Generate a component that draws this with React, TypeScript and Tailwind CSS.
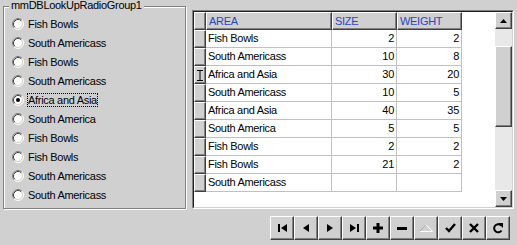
import React from 'react';

const radioItems = [
  'Fish Bowls',
  'South Americass',
  'Fish Bowls',
  'South Americass',
  'Africa and Asia',
  'South America',
  'Fish Bowls',
  'Fish Bowls',
  'South Americass',
  'South Americass',
];

const rows = [
  ['Fish Bowls', '2', '2'],
  ['South Americass', '10', '8'],
  ['Africa and Asia', '30', '20'],
  ['South Americass', '10', '5'],
  ['Africa and Asia', '40', '35'],
  ['South America', '5', '5'],
  ['Fish Bowls', '2', '2'],
  ['Fish Bowls', '21', '2'],
  ['South Americass', '', ''],
];

const Radio = ({ checked }: { checked: boolean }) => (
  <svg width="12" height="12" viewBox="0 0 12 12" className="shrink-0">
    <circle cx="6" cy="6" r="5" fill="#fff" />
    <path d="M9.89 2.11 A5.5 5.5 0 0 0 2.11 9.89" stroke="#808080" fill="none" />
    <path d="M2.11 9.89 A5.5 5.5 0 0 0 9.89 2.11" stroke="#fff" fill="none" />
    <path d="M9.18 2.82 A4.5 4.5 0 0 0 2.82 9.18" stroke="#404040" fill="none" />
    <path d="M2.82 9.18 A4.5 4.5 0 0 0 9.18 2.82" stroke="#d4d0c8" fill="none" />
    {checked && <circle cx="6" cy="6" r="2" fill="#000" />}
  </svg>
);

const raised =
  'bg-[#d0d0d0] border-t border-l border-t-white border-l-white border-r border-b border-r-[#404040] border-b-[#404040] shadow-[inset_-1px_-1px_0_#808080]';

const ScrollBtn = ({ up }: { up: boolean }) => (
  <div className={`w-[17px] h-[17px] flex items-center justify-center ${raised}`}>
    <svg width="7" height="4" viewBox="0 0 7 4">
      {up ? <path d="M3.5 0 L7 4 L0 4 Z" fill="#000" /> : <path d="M0 0 L7 0 L3.5 4 Z" fill="#000" />}
    </svg>
  </div>
);

const navIcons = [
  // first
  <svg width="9" height="8" viewBox="0 0 9 8"><rect x="0" y="0" width="2" height="8" fill="#000" /><path d="M9 0 L9 8 L3 4 Z" fill="#000" /></svg>,
  // prior
  <svg width="6" height="8" viewBox="0 0 6 8"><path d="M6 0 L6 8 L0 4 Z" fill="#000" /></svg>,
  // next
  <svg width="6" height="8" viewBox="0 0 6 8"><path d="M0 0 L0 8 L6 4 Z" fill="#000" /></svg>,
  // last
  <svg width="9" height="8" viewBox="0 0 9 8"><path d="M0 0 L0 8 L6 4 Z" fill="#000" /><rect x="7" y="0" width="2" height="8" fill="#000" /></svg>,
  // insert
  <svg width="10" height="10" viewBox="0 0 10 10"><rect x="3.5" y="0" width="3" height="10" fill="#000" /><rect x="0" y="3.5" width="10" height="3" fill="#000" /></svg>,
  // delete
  <svg width="10" height="3" viewBox="0 0 10 3"><rect x="0" y="0" width="10" height="3" fill="#000" /></svg>,
  // edit (disabled)
  <svg width="14" height="8" viewBox="0 0 14 8"><path d="M7 0.5 L13.5 7.5 L0.5 7.5 Z" fill="none" stroke="#fff" /><path d="M7 0.5 L0.5 7.5" stroke="#a0a0a0" fill="none" /></svg>,
  // post
  <svg width="11" height="10" viewBox="0 0 11 10"><path d="M1 5 L4 8 L10 1" stroke="#000" strokeWidth="2.4" fill="none" /></svg>,
  // cancel
  <svg width="10" height="10" viewBox="0 0 10 10"><path d="M1 1 L9 9 M9 1 L1 9" stroke="#000" strokeWidth="2.4" fill="none" /></svg>,
  // refresh
  <svg width="10" height="11" viewBox="0 0 10 11"><path d="M8 2.5 A4 4 0 1 0 8.5 7.5" stroke="#000" strokeWidth="2" fill="none" /><path d="M5 0 L10 0 L10 5 Z" fill="#000" /></svg>,
];

export default function App() {
  return (
    <div className="w-[517px] h-[245px] bg-[#d0d0d0] font-['Liberation_Sans',Arial,sans-serif] text-[11px] tracking-[-0.3px] text-black overflow-hidden">
      <div className="flex items-start pt-[6px] pl-[3px]">
        {/* Radio group */}
        <div className="relative w-[183px] h-[203px] border border-[#808080] shadow-[inset_1px_1px_0_#fff,1px_1px_0_#fff]">
          <span className="absolute left-[5px] -top-[8px] px-[2px] bg-[#d0d0d0] leading-[13px]">mmDBLookUpRadioGroup1</span>
          <div className="flex flex-col pt-[7px] pl-[8px]">
            {radioItems.map((item, i) => (
              <div key={i} className="flex items-center h-[19px] gap-[3px]">
                <Radio checked={i === 4} />
                <span
                  className={`px-[1px] leading-[14px] ${
                    i === 4 ? 'outline outline-1 outline-dotted outline-black -outline-offset-1' : ''
                  }`}
                >
                  {item}
                </span>
              </div>
            ))}
          </div>
        </div>

        {/* DB grid */}
        <div className="ml-[6px] mt-[4px] w-[322px] h-[199px] border border-t-[#808080] border-l-[#808080] border-r-white border-b-white">
          <div className="w-full h-full flex border border-t-[#202020] border-l-[#202020] border-r-[#d0d0d0] border-b-[#d0d0d0] bg-white">
            <div className="flex-1 flex flex-col">
              <div className="flex h-[18px]">
                <div className={`w-[12px] h-full ${raised}`} />
                {[
                  ['AREA', 'w-[126px]'],
                  ['SIZE', 'w-[65px]'],
                  ['WEIGHT', 'w-[65px]'],
                ].map(([t, w]) => (
                  <div key={t} className={`${w} h-full ${raised} pl-[2px] text-[#2a46c2] leading-[16px]`}>
                    {t}
                  </div>
                ))}
              </div>
              {rows.map((r, i) => (
                <div key={i} className="flex h-[18px]">
                  <div className={`w-[12px] h-full ${raised} flex items-center justify-center`}>
                    {i === 2 && (
                      <svg width="6" height="11" viewBox="0 0 6 11">
                        <path d="M0 0.5 H6 M3 0.5 V10.5 M0 10.5 H6" stroke="#000" fill="none" />
                      </svg>
                    )}
                  </div>
                  <div className="w-[126px] h-full border-r border-b border-[#c0c0c0] pl-[2px] leading-[17px]">{r[0]}</div>
                  <div className="w-[65px] h-full border-r border-b border-[#c0c0c0] pr-[2px] text-right leading-[17px]">{r[1]}</div>
                  <div className="w-[65px] h-full border-r border-b border-[#c0c0c0] pr-[2px] text-right leading-[17px]">{r[2]}</div>
                </div>
              ))}
            </div>
            {/* scrollbar */}
            <div className="w-[17px] h-full flex flex-col bg-[#e8e8e8]">
              <ScrollBtn up />
              <div className="h-[17px]" />
              <div className={`h-[81px] ${raised}`} />
              <div className="flex-1" />
              <ScrollBtn up={false} />
            </div>
          </div>
        </div>
      </div>

      {/* Navigator */}
      <div className="flex justify-end pr-[7px] mt-[7px]">
        <div className="flex">
          {navIcons.map((icon, i) => (
            <div key={i} className={`w-[24px] h-[24px] flex items-center justify-center ${raised}`}>
              {icon}
            </div>
          ))}
        </div>
      </div>
    </div>
  );
}
